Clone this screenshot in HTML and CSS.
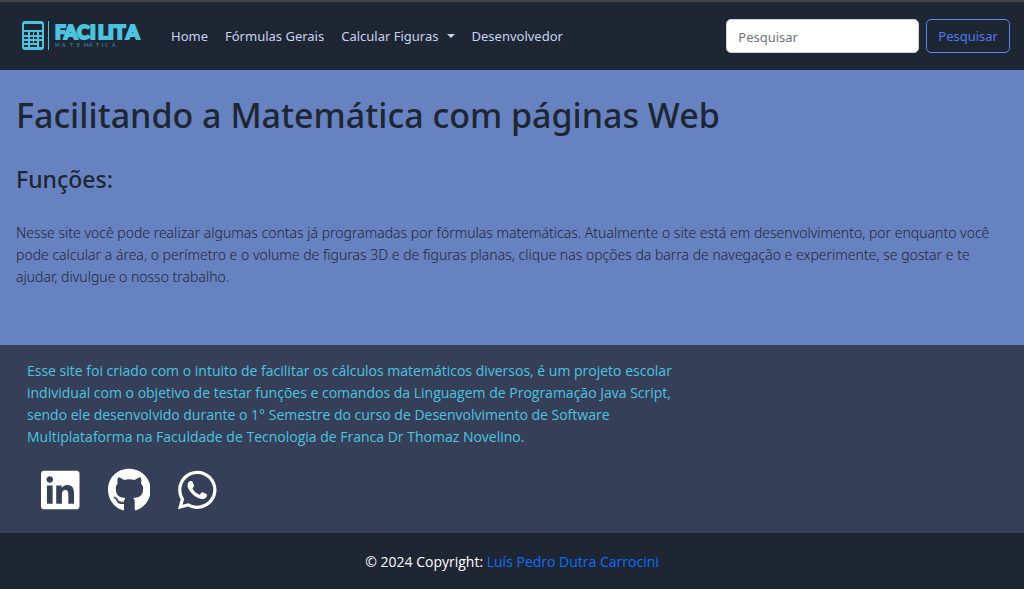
FILE: index.html
```html
<!DOCTYPE html>
<html lang="pt-BR">
<head>
<meta charset="utf-8">
<meta name="viewport" content="width=device-width, initial-scale=1">
<title>Facilita Matemática</title>
<link rel="stylesheet" href="styles.css">
</head>
<body>
<header class="navbar">
  <a class="brand" href="#" aria-label="Facilita Matemática">
    <svg class="brand-logo" viewBox="0 0 120 30" width="120" height="30">
      <path fill-rule="evenodd" d="M3 0H19Q22 0 22 3V26Q22 29 19 29H3Q0 29 0 26V3Q0 0 3 0ZM3 3Q2 3 2 4V9H20V4Q20 3 19 3ZM2 11V14H6V11ZM8 11V14H11V11ZM12 11V14H15V11ZM17 11V14H20V11ZM2 16V18H6V16ZM8 16V18H11V16ZM12 16V18H15V16ZM17 16V18H20V16ZM2 20V22H6V20ZM8 20V22H11V20ZM12 20V22H15V20ZM2 24V26H6V24ZM8 24V26H15V24ZM17 20V26H20V20Z"/>
      <path d="M26 0h1v29h-1z"/>
      <text class="logo-name" y="18" x="33 42 55 68 76 86 92 104">FACILITA</text>
      <text class="logo-sub" y="26" x="33 40 48 55 62 67 74 80 83 90">MATEMÁTICA</text>
    </svg>
  </a>
  <nav class="menu">
    <a class="menu-link" href="#">Home</a>
    <a class="menu-link" href="#">Fórmulas Gerais</a>
    <a class="menu-link menu-toggle" href="#">Calcular Figuras</a>
    <a class="menu-link" href="#">Desenvolvedor</a>
  </nav>
  <form class="search">
    <input class="search-input" type="search" placeholder="Pesquisar" aria-label="Pesquisar">
    <button class="search-button" type="button">Pesquisar</button>
  </form>
</header>
<main class="hero">
  <h1 class="hero-title">Facilitando a Matemática com páginas Web</h1>
  <h2 class="hero-subtitle">Funções:</h2>
  <p class="hero-text">Nesse site você pode realizar algumas contas já programadas por fórmulas matemáticas. Atualmente o site está em desenvolvimento, por enquanto você<br> pode calcular a área, o perímetro e o volume de figuras 3D e de figuras planas, clique nas opções da barra de navegação e experimente, se gostar e te<br> ajudar, divulgue o nosso trabalho.</p>
</main>
<footer class="footer">
  <section class="about">
    <p class="about-text">Esse site foi criado com o intuito de facilitar os cálculos matemáticos diversos, é um projeto escolar<br> individual com o objetivo de testar funções e comandos da Linguagem de Programação Java Script,<br> sendo ele desenvolvido durante o 1° Semestre do curso de Desenvolvimento de Software<br> Multiplataforma na Faculdade de Tecnologia de Franca Dr Thomaz Novelino.</p>
    <div class="social">
      <a class="social-link" href="#" aria-label="LinkedIn"><svg class="social-icon" viewBox="0 0 448 512"><path d="M416 32H31.9C14.3 32 0 46.5 0 64.3v383.4C0 465.5 14.3 480 31.9 480H416c17.6 0 32-14.5 32-32.3V64.3c0-17.8-14.4-32.3-32-32.3zM135.4 416H69V202.2h66.5V416zm-33.2-243c-21.3 0-38.5-17.3-38.5-38.5S80.9 96 102.2 96c21.2 0 38.5 17.3 38.5 38.5 0 21.3-17.2 38.5-38.5 38.5zm282.1 243h-66.4V312c0-24.8-.5-56.7-34.5-56.7-34.6 0-39.9 27-39.9 54.9V416h-66.4V202.2h63.7v29.2h.9c8.9-16.8 30.6-34.5 62.9-34.5 67.2 0 79.7 44.3 79.7 101.9V416z"/></svg></a>
      <a class="social-link" href="#" aria-label="GitHub"><svg class="social-icon" viewBox="0 0 496 512"><path d="M165.9 397.4c0 2-2.3 3.6-5.2 3.6-3.3.3-5.6-1.3-5.6-3.6 0-2 2.3-3.6 5.2-3.6 3-.3 5.6 1.3 5.6 3.6zm-31.1-4.5c-.7 2 1.3 4.3 4.3 4.9 2.6 1 5.6 0 6.2-2s-1.3-4.3-4.3-5.2c-2.6-.7-5.5.3-6.2 2.3zm44.2-1.7c-2.9.7-4.9 2.6-4.6 4.9.3 2 2.9 3.3 5.9 2.6 2.9-.7 4.9-2.6 4.6-4.6-.3-1.9-3-3.2-5.9-2.9zM244.8 8C106.1 8 0 113.3 0 252c0 110.9 69.8 205.8 169.5 239.2 12.8 2.3 17.3-5.6 17.3-12.1 0-6.2-.3-40.4-.3-61.4 0 0-70 15-84.7-29.8 0 0-11.4-29.1-27.8-36.6 0 0-22.9-15.7 1.6-15.4 0 0 24.9 2 38.6 25.8 21.9 38.6 58.6 27.5 72.9 20.9 2.3-16 8.8-27.1 16-33.7-55.9-6.2-112.3-14.3-112.3-110.5 0-27.5 7.6-41.3 23.6-58.9-2.6-6.5-11.1-33.3 2.6-67.9 20.9-6.5 69 27 69 27 20-5.6 41.5-8.5 62.8-8.5s42.8 2.9 62.8 8.5c0 0 48.1-33.6 69-27 13.7 34.7 5.2 61.4 2.6 67.9 16 17.7 25.8 31.5 25.8 58.9 0 96.5-58.9 104.2-114.8 110.5 9.2 7.9 17 22.9 17 46.4 0 33.7-.3 75.4-.3 83.6 0 6.5 4.6 14.4 17.3 12.1C428.2 457.8 496 362.9 496 252 496 113.3 383.5 8 244.8 8zM97.2 352.9c-1.3 1-1 3.3.7 5.2 1.6 1.6 3.9 2.3 5.2 1 1.3-1 1-3.3-.7-5.2-1.6-1.6-3.9-2.3-5.2-1zm-10.8-8.1c-.7 1.3.3 2.9 2.3 3.9 1.6 1 3.6.7 4.3-.7.7-1.3-.3-2.9-2.3-3.9-2-.6-3.6-.3-4.3.7zm32.4 35.6c-1.6 1.3-1 4.3 1.3 6.2 2.3 2.3 5.2 2.6 6.5 1 1.3-1.3.7-4.3-1.3-6.2-2.2-2.3-5.2-2.6-6.5-1zm-11.4-14.7c-1.6 1-1.6 3.6 0 5.9 1.6 2.3 4.3 3.3 5.6 2.3 1.6-1.3 1.6-3.9 0-6.2-1.4-2.3-4-3.3-5.6-2z"/></svg></a>
      <a class="social-link" href="#" aria-label="WhatsApp"><svg class="social-icon" viewBox="0 0 448 512"><path d="M380.9 97.1C339 55.1 283.2 32 223.9 32c-122.4 0-222 99.6-222 222 0 39.1 10.2 77.3 29.6 111L0 480l117.7-30.9c32.4 17.7 68.9 27 106.1 27h.1c122.3 0 224.1-99.6 224.1-222 0-59.3-25.2-115-67.1-157zm-157 341.6c-33.2 0-65.7-8.9-94-25.7l-6.7-4-69.8 18.3L72 359.2l-4.4-7c-18.5-29.4-28.2-63.3-28.2-98.2 0-101.7 82.8-184.5 184.6-184.5 49.3 0 95.6 19.2 130.4 54.1 34.8 34.9 56.2 81.2 56.1 130.5 0 101.8-84.9 184.6-186.6 184.6zm101.2-138.2c-5.5-2.8-32.8-16.2-37.9-18-5.1-1.9-8.8-2.8-12.5 2.8-3.7 5.6-14.3 18-17.6 21.8-3.2 3.7-6.5 4.2-12 1.4-32.6-16.3-54-29.1-75.5-66-5.7-9.8 5.7-9.1 16.3-30.3 1.8-3.7.9-6.9-.5-9.7-1.4-2.8-12.5-30.1-17.1-41.2-4.5-10.8-9.1-9.3-12.5-9.5-3.2-.2-6.9-.2-10.6-.2-3.7 0-9.7 1.4-14.8 6.9-5.1 5.6-19.4 19-19.4 46.3 0 27.3 19.9 53.7 22.6 57.4 2.8 3.7 39.1 59.7 94.8 83.8 35.2 15.2 49 16.5 66.6 13.9 10.7-1.6 32.8-13.4 37.4-26.4 4.6-13 4.6-24.1 3.2-26.4-1.3-2.5-5-3.9-10.5-6.6z"/></svg></a>
    </div>
  </section>
  <p class="copyright">© 2024 Copyright: <a class="copyright-link" href="#">Luís Pedro Dutra Carrocini</a></p>
</footer>
</body>
</html>
```
FILE: styles.css
```css
* { box-sizing: border-box; }
body {
  margin: 0;
  min-height: 100vh;
  display: flex;
  flex-direction: column;
  background: #1f2633;
  color: #1f2633;
  font: 13px/22px "Noto Sans", "Open Sans", sans-serif;
}
a { text-decoration: none; }
h1, h2, p { margin: 0; }

.navbar {
  display: flex;
  align-items: center;
  padding: 17px 14px 17px 22px;
  border-top: 2px solid #444;
  background: #1f2633;
}
.brand { display: flex; margin-right: 29px; }
.brand-logo { fill: #4ec3e0; }
.logo-name {
  font: 900 19px "Lato", sans-serif;
  stroke: #4ec3e0;
  stroke-width: 2px;
}
.logo-sub { font: 5px "Lato", sans-serif; opacity: 0.7; }
.menu { display: flex; gap: 17px; }
.menu-link { color: #c6d3f2; }
.menu-toggle { display: flex; align-items: center; gap: 8px; }
.menu-toggle::after {
  content: "";
  border: 4px solid transparent;
  border-top-color: currentColor;
  border-bottom: 0;
}
.search { display: flex; gap: 7px; margin-left: auto; }
.search-input, .search-button {
  height: 34px;
  border-radius: 5px;
  font: inherit;
}
.search-input {
  width: 193px;
  padding: 2px 11px 0;
  border: 1px solid #ced4da;
  background: #fff;
  color: #212529;
}
.search-input::placeholder { color: #6c757d; opacity: 1; }
.search-button {
  padding: 0 11px;
  border: 1px solid #5a86f0;
  background: transparent;
  color: #4d7af0;
}

.hero {
  flex: 1;
  padding: 23px 16px 56px;
  background: #6782c0;
}
.hero-title { font-size: 34px; line-height: 44px; font-weight: 500; }
.hero-subtitle { margin: 26px 0 27px; font-size: 23px; line-height: 32px; font-weight: 500; }
.hero-text { font-size: 14px; font-weight: 300; }

.about {
  padding: 15px 27px 21px;
  background: #354058;
  color: #4ec3e0;
}
.about-text, .copyright { font-family: "Open Sans", "Noto Sans", sans-serif; font-size: 14px; }
.social { display: flex; gap: 28px; padding: 20px 14px 0; }
.social-link { display: flex; }
.social-icon { height: 44px; fill: #fff; }
.copyright { padding: 18px 16px 16px; text-align: center; color: #fff; }
.copyright-link { color: #0d6efd; }
```
